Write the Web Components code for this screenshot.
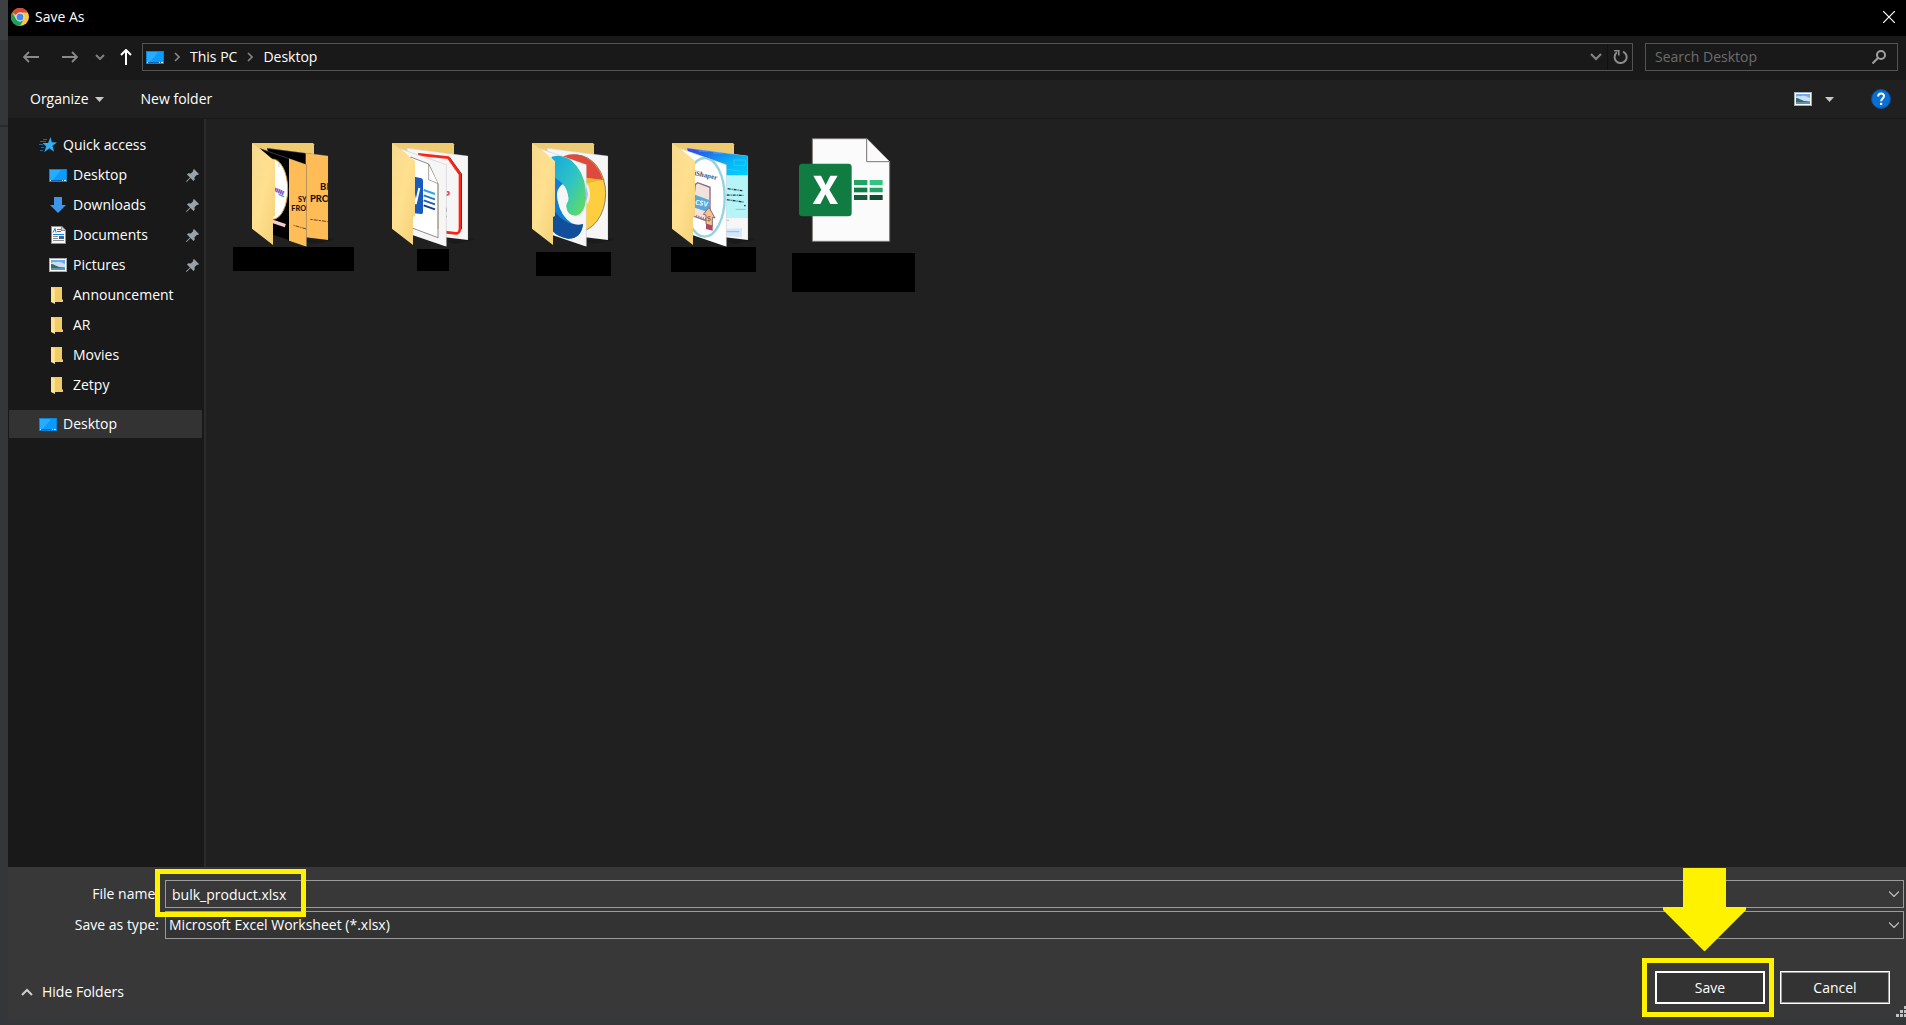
<!DOCTYPE html>
<html lang="en">
<head>
<meta charset="utf-8">
<title>Save As</title>
<style>
    html, body {
        margin: 0;
        height: 100%;
    }

    body {
        font: 14px/20px "Open Sans", "Noto Sans", sans-serif;
        color: #fff;
        background: #35363a;
    }
</style>
</head>
<body>
<save-dialog></save-dialog>

<script>
const RESET = `
    * { box-sizing: border-box; }
    button, input, select {
        font: inherit;
        color: inherit;
        background: none;
        border: 0;
        border-radius: 0;
        margin: 0;
        padding: 0;
        outline: none;
    }
    button { display: flex; align-items: center; cursor: pointer; }
`

const picture = `
    <svg width="18" height="14" viewBox="0 0 18 14">
        <path fill="#a9acae" d="M0 0h18v14H0z"/>
        <path fill="#fff" d="M1 1h16v12H1z"/>
        <path fill="#6fa8ee" d="M2 2h14v10H2z"/>
        <path fill="#c9e2fb" d="M2 5c3-2 4 0 6-1 3-1 5 1 8 2v3H2z"/>
        <path fill="#3d6a5c" d="M2 6c3 0 5 2 8 3l6 1H2z"/>
        <path fill="#5f93b5" d="M2 10h14v2H2z"/>
    </svg>`

const ICONS = {
    chrome: `
        <svg width="18" height="18" viewBox="0 0 18 18">
            <circle cx="9" cy="9" r="9" fill="#fbc840"/>
            <path fill="#d9483b" d="M1.2 4.5A9 9 0 0 1 16.8 4.5H9A4.5 4.5 0 0 0 5 7z"/>
            <path fill="#1da05a" d="M1.2 4.5A9 9 0 0 0 9 18l4-7A4.5 4.5 0 0 1 5 11z"/>
            <circle cx="9" cy="9" r="4.4" fill="#f1f1f1"/>
            <circle cx="9" cy="9" r="3.5" fill="#4587f3"/>
        </svg>`,
    close: `<svg width="12" height="12" viewBox="0 0 12 12"><path stroke="#fff" stroke-width="1.2" d="M0 0l12 12M12 0L0 12"/></svg>`,
    back: `<svg width="16" height="12" viewBox="0 0 16 12"><path fill="none" stroke="#8a8a8a" stroke-width="1.8" d="M6 1L1 6l5 5M1 6h15"/></svg>`,
    forward: `<svg width="16" height="12" viewBox="0 0 16 12"><path fill="none" stroke="#8a8a8a" stroke-width="1.8" d="M10 1l5 5-5 5M15 6H0"/></svg>`,
    up: `<svg width="12" height="16" viewBox="0 0 12 16"><path fill="none" stroke="#fff" stroke-width="2" d="M1 6l5-5 5 5M6 1v15"/></svg>`,
    recent: `<svg width="10" height="6" viewBox="0 0 10 6"><path fill="none" stroke="#808080" stroke-width="2" d="M1 1l4 4 4-4"/></svg>`,
    drop: `<svg width="12" height="8" viewBox="0 0 12 8"><path fill="none" stroke="#858585" stroke-width="2" d="M1 1l5 5 5-5"/></svg>`,
    crumb: `<svg width="6" height="10" viewBox="0 0 6 10"><path fill="none" stroke="#858585" stroke-width="1.6" d="M1 1l4 4-4 4"/></svg>`,
    refresh: `
        <svg width="15" height="16" viewBox="0 0 15 16">
            <path fill="none" stroke="#8c8c8c" stroke-width="2" d="M10 2.6A6 6 0 1 1 4 3.3"/>
            <path fill="none" stroke="#8c8c8c" stroke-width="1.6" d="M1 1.8h4.8v4.8"/>
        </svg>`,
    search: `
        <svg width="14" height="14" viewBox="0 0 14 14">
            <circle cx="9" cy="5" r="4" fill="none" stroke="#a0a0a0" stroke-width="2"/>
            <path stroke="#a0a0a0" stroke-width="2" d="M6 8l-5.5 5.5"/>
        </svg>`,
    triangle: `<svg width="9" height="5" viewBox="0 0 9 5"><path fill="#c8c8c8" d="M0 0h9L4.500 5z"/></svg>`,
    help: `
        <svg width="20" height="20" viewBox="0 0 20 20">
            <circle cx="10" cy="10" r="9.500" fill="#0a6fd3" stroke="#084f97"/>
            <path fill="none" stroke="#fff" stroke-width="2" d="M7.200 7.400C7.200 3.600 13 3.700 13 7c0 2.400-2.800 2.500-2.800 5.200"/>
            <path fill="#fff" d="M9 13.800h2.200V16H9z"/>
        </svg>`,
    star: `
        <svg width="18" height="16" viewBox="0 0 18 16">
            <path fill="#31b0f5" d="M11.500 0l1.300 5.200 5.200.3-4.500 3.300 1.600 6-4.700-3.500-5.200 4 2-6L3.500 6h5.600z"/>
            <path stroke="#176a9e" d="M4 2.500h4M1 4.500h6M0 7.500h4M2 10.500h3M1 13.500h3"/>
        </svg>`,
    desktop: `
        <svg width="18" height="13" viewBox="0 0 18 13">
            <path fill="#0b83d8" d="M0 0h18v13H0z"/>
            <path fill="#0a9bff" d="M1 1h16v10H1z"/>
            <path fill="#27acff" d="M1 1h11L4 11H1z"/>
            <path fill="#0a5fa8" d="M1 11h16v1H1z"/>
            <path fill="#fff" d="M1 11h1v1H1zM13 11h1v1h-1zM15 11h2v1h-2z"/>
        </svg>`,
    download: `<svg width="16" height="16" viewBox="0 0 16 16"><path fill="#3c96ea" d="M4 0h8v8h4l-8 8-8-8h4z"/></svg>`,
    document: `
        <svg width="15" height="18" viewBox="0 0 15 18">
            <path fill="#8b8f92" d="M0 0h11l4 4v14H0z"/>
            <path fill="#f7f7f7" d="M1 1h9v4h4v12H1z"/>
            <path fill="#cfd2d4" d="M11 1l3 3h-3z"/>
            <path fill="none" stroke="#1683d8" d="M2 6.500l2-4 1 4M6 3.500h4M6 5.500h4M2 8.500h11"/>
            <path stroke="#8c8c8c" d="M2 10.500h5M2 12.500h5M2 14.500h11"/>
            <path fill="#36679a" d="M8 10h5v3H8z"/>
        </svg>`,
    picture,
    folder: `
        <svg width="14" height="17" viewBox="0 0 14 17">
            <path fill="#f2cc67" d="M0 0h11v12l1 1v2H2z"/>
            <path fill="#ffe394" d="M0 0l4 2v15l-4-2z"/>
        </svg>`,
    pin: `
        <svg width="13" height="13" viewBox="0 0 13 13">
            <path fill="#98a2a9" d="M8 0l5 5-1 1-1-.300-2.500 2.600.2 2.500-1.200 1.200-3-3L.7 13 0 12.300 4 8.500l-3-3 1.200-1.200 2.600.2L7.300 2 7 1z"/>
        </svg>`,
    thin: `<svg width="10" height="6" viewBox="0 0 10 6"><path fill="none" stroke="#c4c4c4" stroke-width="1.2" d="M0 .5l5 5 5-5"/></svg>`,
    collapse: `<svg width="12" height="8" viewBox="0 0 12 8"><path fill="none" stroke="#cfcfcf" stroke-width="2" d="M1 7l5-5 5 5"/></svg>`,
    grip: `<svg width="10" height="11" viewBox="0 0 10 11"><path fill="#c3c3c3" d="M0 8h3v3H0zM4 8h3v3H4zM8 8h2v3H8zM4 4h3v3H4zM8 4h2v3H8zM8 0h2v3H8z"/></svg>`,
    arrow: `<svg width="84" height="84" viewBox="0 0 84 84"><path fill="#fff200" d="M21 1h42v39h20v3L42 84h-1L0 43v-3h20V1z"/></svg>`
}

class UiIcon extends HTMLElement {
    constructor() {
        super()
        this.attachShadow({ mode: 'open' })
    }

    connectedCallback() {
        this.shadowRoot.innerHTML = `
            <style>
                :host { display: inline-flex; align-items: center; justify-content: center; flex: none; }
                svg { display: block; }
            </style>
            ${ICONS[this.getAttribute('name')] || ''}
        `
    }
}

customElements.define('ui-icon', UiIcon)

// Open folder: back flap, two pages inside, front flap on the left
const folder = (back, front, backFill = '#f6f6f6', frontFill = '#f6f6f6') => `
    <svg width="140" height="114" viewBox="9 39 420 342">
        <defs>
            <linearGradient id="flap" x2="1" y2="1">
                <stop offset="0" stop-color="#f6da8c"/>
                <stop offset=".5" stop-color="#ffe08f"/>
                <stop offset="1" stop-color="#f3d077"/>
            </linearGradient>
            <linearGradient id="blue" x2="1" y2="1">
                <stop offset="0" stop-color="#3b2fe8"/>
                <stop offset=".6" stop-color="#05b4f5"/>
                <stop offset="1" stop-color="#00d5ff"/>
            </linearGradient>
            <linearGradient id="sea" x1="0" x2="1" y1="0" y2="1">
                <stop offset="0" stop-color="#16a8dd"/>
                <stop offset=".5" stop-color="#2fc4c4"/>
                <stop offset="1" stop-color="#6ae04d"/>
            </linearGradient>
            <clipPath id="back"><path d="M141 84L324 108V360L200 345z"/></clipPath>
            <clipPath id="front"><path d="M118 84L260 134V380L159 346V120z"/></clipPath>
        </defs>
        <path fill="#1a1a1a" d="M255 362l80-8 8 6-60 12z"/>
        <path fill="#eecb70" d="M96 69H279l3 4v75H120z"/>
        <g clip-path="url(#back)">
            <path fill="${backFill}" d="M130 80h200v290H130z"/>
            ${back}
        </g>
        <path fill="none" stroke="#bbb" d="M141 85L323 108V359"/>
        <g clip-path="url(#front)">
            <path fill="${frontFill}" d="M110 80h155v300H110z"/>
            ${front}
        </g>
        <path fill="none" stroke="#aaa" d="M120 86L259 134V379"/>
        <path fill="url(#flap)" d="M96 69L165 123V288l-6 3V375L96 326z"/>
    </svg>`

const PREVIEWS = {
    banners: folder(
        `<path fill="#ffbc57" d="M257 90h70v280h-70z"/>
         <g font-family="Lato" font-weight="900" font-size="28" fill="#1c1208"><text x="300" y="211">BL</text><text x="270" y="245">PROC</text></g>
         <path stroke="#684819" stroke-width="3" stroke-dasharray="7 3 12 3" d="M271 298l54 7"/>`,
        `<ellipse cx="158" cy="208" rx="45" ry="90" fill="#fff" stroke="#dba13f" stroke-width="3"/>
         <path fill="#ffbc57" d="M207 100h60v280h-60z"/>
         <path stroke="#9254be" stroke-width="12" stroke-dasharray="5 1" d="M164 208l28 12"/><path stroke="#2aabe4" stroke-width="4" d="M176 223l16 7"/>
         <path stroke="#f5cbd3" stroke-width="10" d="M158 304l38 13"/>
         <path fill="none" stroke="#777" d="M158 115l19 6v20M159 346l46 15"/>
         <g font-family="Lato" font-weight="900" font-size="22" fill="#1c1208"><text x="234" y="246">SY</text><text x="214" y="272">FRON</text></g>
         <path stroke="#684819" stroke-width="3" stroke-dasharray="3 3 12 3" d="M221 316l38 11"/>`,
        '#000', '#000'),
    papers: folder(
        `<path fill="none" stroke="#333" stroke-width="4" d="M268 113l36 50v165"/>
         <path fill="none" stroke="#fb2416" stroke-width="8" stroke-linejoin="round" d="M174 103l91 10 35 50V325q-1 16-13 15l-50-6"/>
         <path fill="none" stroke="#f1404d" stroke-width="5" d="M260 216q10-3 6 7l-7 3"/>
         <path stroke="#444" stroke-width="2" d="M259 263v13M259 287v5"/>`,
        `<path fill="#fff" stroke="#555" stroke-width="2" d="M152 111l54 21 28 60V353l-80-30z"/>
         <path fill="none" stroke="#a28e57" stroke-width="2" d="M206 132l28 60v135"/>
         <path fill="#fff" stroke="#777" stroke-width="2" d="M206 134v45l28 12"/>
         <path fill="#185abd" d="M150 167l34 8q5 1 5 8v94q0 6-6 5l-33-4z"/>
         <path fill="none" stroke="#fff" stroke-width="6" d="M160 210l7 42 11-48"/>
         <g stroke-width="6"><path stroke="#2da5e8" d="M191 210l34 12"/><path stroke="#1f79c9" d="M191 226l34 12"/><path stroke="#1d60b4" d="M191 241l34 12"/><path stroke="#173b87" d="M191 256l34 12"/></g>`),
    browsers: folder(
        `<ellipse cx="229" cy="221" rx="88" ry="116" fill="#ffce3f" stroke="#555" stroke-width="2"/>
         <path fill="#de4a3e" d="M170 120q50-34 100 0 28 22 39 60l-80-8z"/>
         <path fill="#e8b72f" d="M250 172l58 8-48 10z"/>
         <ellipse cx="236" cy="222" rx="34" ry="46" fill="#eee"/><ellipse cx="236" cy="222" rx="27" ry="37" fill="#8f9bf1"/>`,
        `<path fill="#0b80d5" d="M155 160q30 0 45 30-32 2-26 50 8 60 75 75-8 45-50 40-44-15-50-65z"/>
         <path fill="#124f9b" d="M158 265q15 28 50 45l41 2q-5 45-45 44-32-5-46-22z"/>
         <path fill="url(#sea)" d="M155 110q45-13 77 31 28 36 26 95-2 42-29 51-25 2-29-21c-5-20 10-18 4-39q-5-31-29-47l-20-15z"/>
         <path fill="#f6f6f6" d="M186 201q-20 2-13 41 9 46 42 68 19 8 34 1l11-46q-11 25-36 23-22-4-26-25c-3-17 9-18 6-33-3-18-7-27-18-29z"/>`),
    stores: folder(
        `<path fill="url(#blue)" d="M130 80h200v90H130z"/>
         <path fill="#b6f4f8" d="M230 166h100v128H230z"/><path fill="#d4e8fb" d="M258 326l48-2v28l-48-4z"/>
         <path fill="none" stroke="#49ccf4" stroke-width="2" d="M176 93h30M220 99h28M282 120h34v16h-34zM240 145l60 8"/>
         <g stroke="#173e4d" stroke-width="4" stroke-dasharray="9 3 3 3"><path d="M263 206l44 6M260 225l50 1M260 239l50 7M312 257h5"/></g>
         <path stroke="#7ba8b2" stroke-width="2" d="M287 268h30M260 301h7M260 335h38"/>`,
        `<ellipse cx="194" cy="232" rx="60" ry="118" fill="none" stroke="#91d4e0" stroke-width="7"/>
         <g font-family="Liberation Serif" font-weight="700" font-size="21" fill="#324f79" transform="rotate(12 180 165)"><text x="147" y="169">wiShaper</text></g>
         <path fill="#f2e2dc" stroke="#8d6686" stroke-width="4" d="M166 193l7-5 37 14v104l-48-17v-62z"/>
         <path fill="#58a9dc" d="M160 223l50 18v37l-50-16z"/>
         <g font-family="Open Sans" font-weight="700" font-size="21" fill="#e8f7ff" transform="rotate(10 185 250)"><text x="165" y="257">CSV</text></g>
         <path stroke="#905b7a" stroke-width="5" stroke-dasharray="3 4" d="M162 285l36 12"/>
         <path fill="#f5c681" stroke="#8c6480" stroke-width="3" d="M207 262l18 32-8-2v26l-19-6v-27l-8-2z"/>
         <text x="200" y="304" font-family="Open Sans" font-size="23" fill="#764959">$</text>
         <path fill="#b34365" d="M198 312l20 6v14l-20-5z"/>`,
        '#f6f6f6', '#fff'),
    excel: `
        <svg width="140" height="114" viewBox="39 39 420 342">
            <path fill="#fbfbfb" stroke="#777471" stroke-width="3" d="M127 56H291l68 69V364H127z"/>
            <path fill="#fbfbfb" stroke="#777471" stroke-width="3" d="M290 56v69h69"/>
            <rect x="87" y="131" width="158" height="158" rx="10" fill="#107c41"/>
            <path fill="#fff" d="M130 167h23l14 28 14-28h22l-25 42 26 43h-23l-15-29-15 29h-23l26-43z"/>
            <path fill="#21a366" d="M252 180h40v15h-40zM299 203h39v14h-39z"/>
            <path fill="#33c481" d="M299 180h39v15h-39z"/>
            <path fill="#107c41" d="M252 203h40v14h-40z"/>
            <path fill="#185c37" d="M252 225h40v15h-40z"/>
            <path fill="#134a2c" d="M299 225h39v15h-39z"/>
        </svg>`
}

class FileTile extends HTMLElement {
    constructor() {
        super()
        this.attachShadow({ mode: 'open' })
    }

    connectedCallback() {
        const [width, height, gap] = this.getAttribute('cover').split(' ')
        this.shadowRoot.innerHTML = `
            <style>
                ${RESET}
                :host { display: block; }
                button { flex-direction: column; width: 140px; }
                svg { display: block; }
                .cover {
                    width: ${width}px;
                    height: ${height}px;
                    margin-top: ${gap}px;
                    background: #000;
                }
            </style>
            <button type="button" aria-label="${this.getAttribute('kind')}">
                ${PREVIEWS[this.getAttribute('kind')]}
                <span class="cover"></span>
            </button>
        `
    }
}

customElements.define('file-tile', FileTile)

class TreeItem extends HTMLElement {
    constructor() {
        super()
        this.attachShadow({ mode: 'open' })
    }

    connectedCallback() {
        this.shadowRoot.innerHTML = `
            <style>
                ${RESET}
                :host { display: block; }
                button {
                    width: 100%;
                    height: 30px;
                    padding: 0 3px 0 40px;
                    gap: 6px;
                    text-align: left;
                }
                :host([root]) button { padding-left: 30px; }
                :host([selected]) button { height: 28px; background: #333; }
                .icon { width: 18px; }
                .label { flex: 1; }
            </style>
            <button type="button">
                <ui-icon class="icon" name="${this.getAttribute('icon')}"></ui-icon>
                <span class="label"><slot></slot></span>
                ${this.hasAttribute('pinned') ? '<ui-icon name="pin"></ui-icon>' : ''}
            </button>
        `
    }
}

customElements.define('tree-item', TreeItem)

class FolderTree extends HTMLElement {
    constructor() {
        super()
        this.attachShadow({ mode: 'open' })
    }

    connectedCallback() {
        this.shadowRoot.innerHTML = `
            <style>
                :host {
                    display: block;
                    flex: none;
                    width: 198px;
                    box-sizing: border-box;
                    padding: 11px 2px 0 1px;
                    background: #191919;
                    border-right: 2px solid #2b2b2b;
                }
                nav { display: flex; flex-direction: column; }
                .current { margin-top: 10px; }
            </style>
            <nav>
                <tree-item root icon="star">Quick access</tree-item>
                <tree-item icon="desktop" pinned>Desktop</tree-item>
                <tree-item icon="download" pinned>Downloads</tree-item>
                <tree-item icon="document" pinned>Documents</tree-item>
                <tree-item icon="picture" pinned>Pictures</tree-item>
                <tree-item icon="folder">Announcement</tree-item>
                <tree-item icon="folder">AR</tree-item>
                <tree-item icon="folder">Movies</tree-item>
                <tree-item icon="folder">Zetpy</tree-item>
                <tree-item class="current" root selected icon="desktop">Desktop</tree-item>
            </nav>
        `
    }
}

customElements.define('folder-tree', FolderTree)

class AddressBar extends HTMLElement {
    constructor() {
        super()
        this.attachShadow({ mode: 'open' })
    }

    connectedCallback() {
        this.shadowRoot.innerHTML = `
            <style>
                ${RESET}
                :host {
                    display: flex;
                    align-items: center;
                    box-sizing: border-box;
                    height: 44px;
                    padding: 0 8px 2px 15px;
                    background: #191919;
                }
                .arrows { display: flex; align-items: center; width: 119px; }
                .back { margin-right: 23px; }
                .forward { margin-right: 17px; }
                .recent { margin-right: 15px; }
                .box {
                    display: flex;
                    align-items: center;
                    height: 28px;
                    border: 1px solid #535353;
                }
                .path { flex: 1; padding: 0 4px 0 3px; }
                .path .crumb { margin: 0 10px; }
                .fill { flex: 1; }
                .refresh {
                    height: 26px;
                    margin-left: 5px;
                    padding-left: 5px;
                    border-left: 1px solid #111;
                }
                .search { width: 253px; margin-left: 12px; padding: 0 11px 0 9px; }
                input { flex: 1; min-width: 0; }
                input::placeholder { color: #6d6d6d; opacity: 1; }
            </style>
            <div class="arrows">
                <button class="back" type="button" aria-label="Back"><ui-icon name="back"></ui-icon></button>
                <button class="forward" type="button" aria-label="Forward"><ui-icon name="forward"></ui-icon></button>
                <button class="recent" type="button" aria-label="Recent locations"><ui-icon name="recent"></ui-icon></button>
                <button type="button" aria-label="Up"><ui-icon name="up"></ui-icon></button>
            </div>
            <div class="box path">
                <ui-icon name="desktop"></ui-icon>
                <ui-icon class="crumb" name="crumb"></ui-icon>
                <button type="button">This PC</button>
                <ui-icon class="crumb" name="crumb"></ui-icon>
                <button type="button">Desktop</button>
                <span class="fill"></span>
                <button type="button" aria-label="Previous locations"><ui-icon name="drop"></ui-icon></button>
                <button class="refresh" type="button" aria-label="Refresh"><ui-icon name="refresh"></ui-icon></button>
            </div>
            <div class="box search">
                <input type="text" placeholder="Search Desktop" aria-label="Search Desktop">
                <ui-icon name="search"></ui-icon>
            </div>
        `
    }
}

customElements.define('address-bar', AddressBar)

class CommandBar extends HTMLElement {
    constructor() {
        super()
        this.attachShadow({ mode: 'open' })
    }

    connectedCallback() {
        this.shadowRoot.innerHTML = `
            <style>
                ${RESET}
                :host {
                    display: flex;
                    align-items: center;
                    height: 39px;
                    padding: 0 15px 0 22px;
                    background: #202020;
                    border-bottom: 1px solid #191919;
                    box-sizing: border-box;
                }
                .organize { gap: 6px; margin-right: 37px; }
                .view { gap: 13px; margin-left: auto; margin-right: 37px; }
            </style>
            <button class="organize" type="button">Organize <ui-icon name="triangle"></ui-icon></button>
            <button type="button">New folder</button>
            <button class="view" type="button" aria-label="Change your view">
                <ui-icon name="picture"></ui-icon>
                <ui-icon name="triangle"></ui-icon>
            </button>
            <button type="button" aria-label="Help"><ui-icon name="help"></ui-icon></button>
        `
    }
}

customElements.define('command-bar', CommandBar)

class SaveForm extends HTMLElement {
    constructor() {
        super()
        this.attachShadow({ mode: 'open' })
    }

    connectedCallback() {
        this.shadowRoot.innerHTML = `
            <style>
                ${RESET}
                :host {
                    display: block;
                    position: relative;
                    padding: 13px 0 16px;
                    background: #383838;
                }
                .fields {
                    display: grid;
                    grid-template-columns: 151px 1fr;
                    column-gap: 6px;
                    row-gap: 3px;
                    align-items: center;
                    margin-right: 2px;
                }
                label { text-align: right; }
                .field { display: grid; align-items: center; position: relative; }
                .field > input, .field > select, .field > .chevron { grid-area: 1 / 1; }
                input, select {
                    width: 100%;
                    height: 28px;
                    border: 1px solid #9b9b9b;
                    appearance: none;
                }
                input { padding: 0 24px 0 6px; background: #383838; }
                select { padding: 0 24px 0 3px; background: #333; }
                .chevron { justify-self: end; margin-right: 5px; pointer-events: none; }
                .actions {
                    display: flex;
                    align-items: flex-end;
                    gap: 15px;
                    margin: 32px 16px 0 13px;
                }
                .hide { gap: 9px; margin-right: auto; padding-bottom: 2px; }
                .action { position: relative; }
                .action button {
                    justify-content: center;
                    width: 110px;
                    height: 33px;
                    background: #333;
                    border: 1px solid #fff;
                    box-shadow: inset 0 0 0 1px #9b9b9b;
                }
                .action .primary { border-width: 2px; box-shadow: none; }
                .mark {
                    position: absolute;
                    z-index: 1;
                    border: 5px solid #fff200;
                    pointer-events: none;
                }
                .name-mark { left: -10px; top: -11px; width: 151px; height: 48px; }
                .save-mark { inset: -13px -9px -13px -13px; }
                .arrow { position: absolute; z-index: 1; left: 8px; bottom: 53px; }
                .grip { position: absolute; right: 0; bottom: 3px; }
            </style>
            <div class="fields">
                <label for="name">File name:</label>
                <div class="field">
                    <input id="name" type="text" value="bulk_product.xlsx">
                    <ui-icon class="chevron" name="thin"></ui-icon>
                    <span class="mark name-mark"></span>
                </div>
                <label for="type">Save as type:</label>
                <div class="field">
                    <select id="type"><option>Microsoft Excel Worksheet (*.xlsx)</option></select>
                    <ui-icon class="chevron" name="thin"></ui-icon>
                </div>
            </div>
            <div class="actions">
                <button class="hide" type="button"><ui-icon name="collapse"></ui-icon>Hide Folders</button>
                <div class="action">
                    <button class="primary" type="submit">Save</button>
                    <span class="mark save-mark"></span>
                    <ui-icon class="arrow" name="arrow"></ui-icon>
                </div>
                <div class="action"><button type="button">Cancel</button></div>
            </div>
            <ui-icon class="grip" name="grip"></ui-icon>
        `
    }
}

customElements.define('save-form', SaveForm)

class SaveDialog extends HTMLElement {
    constructor() {
        super()
        this.attachShadow({ mode: 'open' })
    }

    connectedCallback() {
        this.shadowRoot.innerHTML = `
            <style>
                ${RESET}
                :host {
                    display: flex;
                    flex-direction: column;
                    min-height: 100vh;
                    box-sizing: border-box;
                    padding: 0 0 5px 8px;
                    background: linear-gradient(#3c4043 40px, #35363a 40px, #35363a 125px, #292a2d 125px, #292a2d 127px, #35363a 127px);
                }
                header {
                    display: flex;
                    align-items: center;
                    gap: 6px;
                    height: 36px;
                    padding: 0 11px 2px 3px;
                    background: #000;
                }
                header button { margin-left: auto; }
                main { display: flex; flex: 1; background: #202020; }
                .files {
                    display: flex;
                    flex: 1;
                    flex-wrap: wrap;
                    align-content: flex-start;
                    padding: 14px 17px;
                }
            </style>
            <header>
                <ui-icon name="chrome"></ui-icon>
                <span>Save As</span>
                <button type="button" aria-label="Close"><ui-icon name="close"></ui-icon></button>
            </header>
            <address-bar></address-bar>
            <command-bar></command-bar>
            <main>
                <folder-tree></folder-tree>
                <div class="files">
                    <file-tile kind="banners" cover="121 24 0"></file-tile>
                    <file-tile kind="papers" cover="32 22 2"></file-tile>
                    <file-tile kind="browsers" cover="75 24 5"></file-tile>
                    <file-tile kind="stores" cover="85 25 0"></file-tile>
                    <file-tile kind="excel" cover="123 39 6"></file-tile>
                </div>
            </main>
            <save-form></save-form>
        `
    }
}

customElements.define('save-dialog', SaveDialog)
</script>
</body>
</html>
